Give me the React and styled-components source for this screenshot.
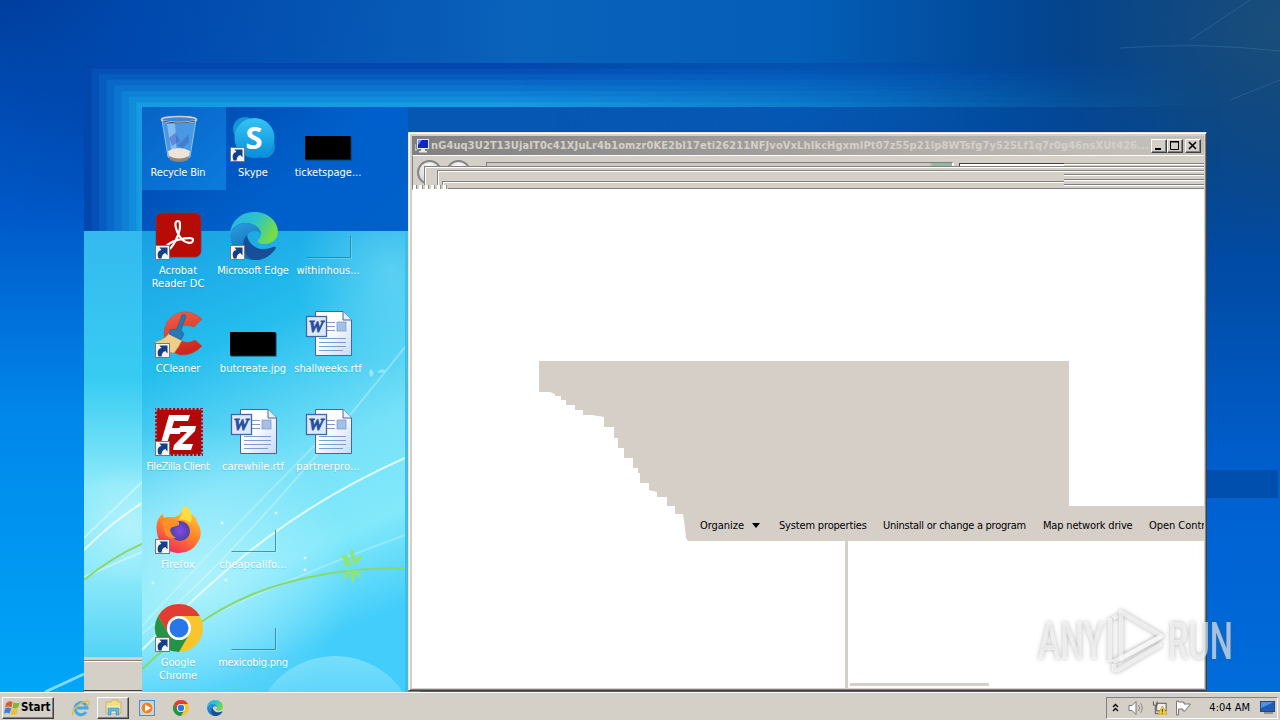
import React from "react";
import styled, { createGlobalStyle, css } from "styled-components";

const face = "#d4d0c8";
const ui = '"DejaVu Sans Condensed", "DejaVu Sans", "Liberation Sans", sans-serif';

const Global = createGlobalStyle`
  * { box-sizing: border-box; }
  body { margin: 0; overflow: hidden; background: #0058c0; }
`;

const Screen = styled.div`
  position: relative;
  display: flex;
  flex-direction: column;
  width: 1280px;
  height: 720px;
  overflow: hidden;
  font: 11px/13px ${ui};
  color: #000;
`;

const Desktop = styled.main`
  position: relative;
  flex: 1;
`;

const Backdrop = styled.svg`
  position: absolute;
  inset: 0;
  display: block;
`;

const IconGrid = styled.div`
  position: absolute;
  left: 141px;
  top: 114px;
  display: grid;
  grid-template-rows: repeat(6, 98px);
  grid-auto-columns: 75px;
  grid-auto-flow: column;
`;

const Shortcut = styled.div`
  display: flex;
  flex-direction: column;
  align-items: center;
  gap: 4px;
  color: #fff;
  text-align: center;
  svg { margin-left: 1px; overflow: visible; }
`;

const Caption = styled.span`
  white-space: pre;
  margin-right: 1px;
  letter-spacing: ${(p) => p.$track || 0}px;
  text-shadow: 0 1px 1px rgba(0, 60, 120, 0.2);
`;

const Frame = styled.section`
  position: absolute;
  left: 408px;
  top: 132px;
  width: 799px;
  height: 559px;
  display: flex;
  flex-direction: column;
  padding: 2px;
  background: ${face};
  border: 1px solid;
  border-color: #e6e3dc #404040 #404040 #e6e3dc;
  box-shadow: inset 1px 1px #fff, inset -1px -1px #808080;
`;

const TitleBar = styled.header`
  display: flex;
  align-items: center;
  height: 19px;
  margin-top: 1px;
  margin-left: 1px;
  padding: 0 3px 0 3px;
  background: linear-gradient(90deg, #808080, #a5a2a0 50%, #c2bfba 90%);
`;

const Title = styled.span`
  flex: 1;
  width: 0;
  overflow: hidden;
  white-space: nowrap;
  margin-left: 2px;
  font-weight: bold;
  letter-spacing: ${(p) => p.$track}px;
  color: ${face};
`;

const CaptionButton = styled.button`
  width: 16px;
  height: 14px;
  padding: 0;
  margin-left: ${(p) => (p.$apart ? 2 : 0)}px;
  background: ${face};
  border: 1px solid;
  border-color: #fff #404040 #404040 #fff;
  box-shadow: inset -1px -1px #808080;
  svg { display: block; }
`;

const Smear = styled.div`
  position: relative;
  height: 35px;
  margin-left: 1px;
  overflow: hidden;
  background: ${face};
  border-left: 1px solid #808080;
  border-top: 1px solid #fff;
  border-bottom: 1px solid #fff;
`;

const NavDisc = styled.i`
  position: absolute;
  left: ${(p) => p.$x}px;
  top: 4px;
  width: 25px;
  height: 25px;
  border: 2px solid #858585;
  border-radius: 50%;
  background: radial-gradient(circle at 50% 30%, #fff, #c8c8c8);
`;

const Ghost = styled.div`
  position: absolute;
  left: ${(p) => p.$x}px;
  top: ${(p) => p.$y}px;
  right: 0;
  bottom: 0;
  background: ${face};
  border-left: 1px solid #808080;
  border-top: 1px solid #808080;
  box-shadow: inset 1px 1px #fff;
`;

const AddressGhost = styled.div`
  position: absolute;
  left: 73px;
  top: 6px;
  width: 468px;
  height: 5px;
  border-left: 1px solid #808080;
  border-top: 1px solid #808080;
  border-right: 2px solid #fff;
  background: linear-gradient(90deg, #ccc9c2 95%, #91b8a0 96%);
`;

const SearchGhost = styled.div`
  position: absolute;
  left: 546px;
  top: 7px;
  width: 105px;
  height: 4px;
  background: #fff;
  border-left: 1px solid #404040;
  border-top: 1px solid #404040;
`;

const Scanlines = styled.div`
  position: absolute;
  right: 0;
  top: ${(p) => p.$y}px;
  width: 140px;
  height: ${(p) => p.$h}px;
  background: ${(p) => p.$fill};
`;

const Teeth = styled.div`
  position: absolute;
  left: 0;
  bottom: 0;
  width: 34px;
  height: 4px;
  background: repeating-linear-gradient(90deg, #fff 0 3px, #8c8a86 3px 4px, #d4d0c8 4px 6px);
`;

const Content = styled.div`
  flex: 1;
  display: flex;
  flex-direction: column;
  margin-left: 1px;
  margin-right: -1px;
  padding-top: 171px;
  background: #fff;
  border-right: 1px solid ${face};
`;

const edge = [
  [0, 0], [0, 31], [11, 31], [16, 33], [16, 35], [22, 35], [22, 39], [27, 39], [27, 44], [36, 44], [36, 49],
  [44, 49], [44, 54], [53, 54], [65, 56], [65, 66], [75, 66], [75, 77], [79, 77], [79, 87], [85, 87],
  [85, 97], [94, 97], [94, 107], [99, 107], [99, 112], [101, 112], [101, 122], [110, 122], [110, 129],
  [118, 131], [118, 136], [128, 136], [128, 145], [136, 145], [136, 153], [144, 153], [146, 167],
  [147, 177], [149, 180], [665, 180], [665, 145], [530, 145], [530, 0],
].map(([x, y]) => `${x}px ${y}px`).join(",");

const DragTrail = styled.div`
  height: 180px;
  margin-left: 127px;
  display: flex;
  flex-direction: column;
  justify-content: flex-end;
  overflow: hidden;
  background: #d5cfc8;
  clip-path: polygon(${edge});
`;

const CommandBar = styled.nav`
  display: flex;
  align-items: center;
  gap: 17px;
  height: 32px;
  padding-left: 161px;
  white-space: nowrap;
`;

const Command = styled.span`
  flex: none;
  display: flex;
  align-items: center;
  width: ${(p) => p.$w}px;
  letter-spacing: ${(p) => p.$track || 0}px;
`;

const Arrow = styled.i`
  margin-left: auto;
  margin-right: 2px;
  border: 4px solid transparent;
  border-top: 5px solid #000;
  border-bottom: 0;
`;

const Panes = styled.div`
  flex: 1;
  display: grid;
  grid-template-columns: 433px 3px 1fr;
`;

const Divider = styled.div`
  background: ${face};
`;

const Pane = styled.div`
  display: flex;
  flex-direction: column;
  justify-content: flex-end;
  padding: 0 0 2px 2px;
`;

const StatusStub = styled.div`
  width: 139px;
  height: 3px;
  background: ${face};
`;

const Watermark = styled.svg`
  position: absolute;
  left: 1030px;
  top: 600px;
  overflow: visible;
  filter: drop-shadow(0 0 2px rgba(90, 90, 90, 0.7));
`;

const Taskbar = styled.footer`
  display: flex;
  align-items: center;
  height: 28px;
  padding: 2px 2px 0;
  background: ${face};
  border-top: 1px solid #fff;
  position: relative;
`;

const raised = css`
  border: 1px solid;
  border-color: #fff #404040 #404040 #fff;
  box-shadow: inset -1px -1px #808080;
`;

const StartButton = styled.button`
  display: flex;
  align-items: center;
  gap: 1px;
  width: 52px;
  height: 22px;
  padding: 0 1px;
  background: ${face};
  font: bold 11.5px/13px ${ui};
  letter-spacing: 0;
  ${raised}
`;

const LaunchBar = styled.div`
  display: flex;
  margin-left: 10px;
`;

const Launch = styled.div`
  display: flex;
  align-items: center;
  justify-content: center;
  width: ${(p) => p.$w}px;
  height: 22px;
  border: 1px solid transparent;
  ${(p) => p.$open && raised}
`;

const Tray = styled.div`
  display: flex;
  align-items: center;
  width: 172px;
  height: 22px;
  margin-left: auto;
  padding: 0 2px 0 4px;
  border: 1px solid;
  border-color: #808080 #fff #fff #808080;
`;

const TrayItem = styled.span`
  display: flex;
  justify-content: center;
  width: ${(p) => p.$w}px;
`;

/* ---- drawings ---- */

const Arrowlet = () => (
  <g>
    <rect x="0.5" y="33.5" width="14" height="14" fill="#f4f4f4" stroke="#777" />
    <path d="M3.500 46.500C1.500 41 3.500 38.500 6.500 38L4.500 35.500H12.500V43.500L10.300 41C8 42 6.500 43.500 6.700 46.500Z" fill="#153f86" />
  </g>
);

const Svg = ({ children, link }) => (
  <svg width="48" height="48" viewBox="0 0 48 48">
    {children}
    {link && <Arrowlet />}
  </svg>
);

const Bin = () => (
  <Svg>
    <path d="M7 6L13 43Q24 49 35 43L41 6Z" fill="#75b5f2" fillOpacity=".6" stroke="#b6d8f5" strokeOpacity=".7" />
    <path d="M12 10L17 42L22 44L20 10Z" fill="#e0f2ff" opacity=".4" />
    <path d="M34 20L22 32L28 34L34 28Z" fill="#3a70c0" opacity=".6" />
    <path d="M14 24l6-5 5 8-8 5z" fill="#4754bd" opacity=".5" />
    <path d="M13 37Q24 31 35 37L34 43Q24 48 14 43Z" fill="#eee3d7" />
    <path d="M14 42Q24 47 34 42L33 46Q24 50 15 46Z" fill="#90867d" />
    <ellipse cx="24" cy="5.500" rx="17.500" ry="3" fill="#3f86d4" stroke="#cfcfcf" strokeWidth="1.700" />
    <path d="M8 7Q24 11 40 7" fill="none" stroke="#555" strokeWidth="1" />
  </Svg>
);

const Skype = () => (
  <Svg link>
    <defs><linearGradient id="sk" x2="0" y2="1"><stop stopColor="#35c4f2" /><stop offset="1" stopColor="#078fda" /></linearGradient></defs>
    <circle cx="15" cy="15" r="12" fill="#1296da" />
    <circle cx="34" cy="33" r="11" fill="#128fd9" />
    <circle cx="24.500" cy="24" r="20" fill="url(#sk)" />
    <text x="24" y="35" textAnchor="middle" fontFamily="Open Sans, sans-serif" fontWeight="700" fontSize="31" fill="#fff">S</text>
  </Svg>
);

const Acrobat = () => (
  <Svg link>
    <rect x="1" y="1" width="45" height="44" rx="6" fill="#b70b05" stroke="#86372f" strokeWidth=".7" />
    <path d="M23 9C18 9 21 19 25 25C29 31 38 33 38 28C38 24 23 27 17 30C11 33 8 38 12 38C17 38 25 22 25 14C25 11 25 9 23 9Z" fill="none" stroke="#fff" strokeWidth="2.200" />
  </Svg>
);

const EdgeArt = () => (
  <g>
    <defs>
      <linearGradient id="eg" x2="1" y2=".4"><stop stopColor="#2bb1e5" /><stop offset=".55" stopColor="#2cc3cc" /><stop offset="1" stopColor="#74dc45" /></linearGradient>
      <linearGradient id="eb" x2=".4" y2="1"><stop stopColor="#2aa0df" /><stop offset="1" stopColor="#1369ba" /></linearGradient>
    </defs>
    <path d="M0 22C1 9 11 0 24 0C39 0 48 10 48 20C48 28 41 32 34 32C29 32 27 30 28 28C30 26 31 24 31 22C30 16 23 11 16 11C8 11 3 15 0 22Z" fill="url(#eg)" />
    <path d="M0 22C3 15 9 11 16 11C24 11 31 16 31 22C27 17 19 19 17 24C13 33 20 44 32 47C15 52 0 39 0 22Z" fill="url(#eb)" />
    <path d="M17 23C18 32 28 40 40 36C44 35 46 34 46 36C42 43 33 49 24 48C15 46 9 32 17 23Z" fill="#164f98" />
  </g>
);

const CCleaner = () => (
  <Svg link>
    <defs><linearGradient id="cc" x2=".3" y2="1"><stop stopColor="#f1654d" /><stop offset="1" stopColor="#cf251c" /></linearGradient></defs>
    <path d="M47 9Q36-1 23 3Q9 9 9 25Q10 41 25 45Q38 46 47 36L40 30Q33 34 27 31Q22 28 22 22Q25 12 39 17Z" fill="url(#cc)" stroke="#b5523f" strokeWidth=".6" />
    <path d="M0 32Q12 29 15 21L27 30Q24 37 19 43Q9 42 0 32Z" fill="#f1cf8a" stroke="#c39751" strokeWidth=".6" />
    <path d="M15 20L22 19L27 5Q30 3 31 6L26 20L29 24L26 30L14 24Z" fill="#2679b5" stroke="#195d91" strokeWidth=".6" />
  </Svg>
);

const FileZilla = () => (
  <Svg link>
    <rect width="48" height="48" fill="#b20708" />
    <rect x=".7" y=".7" width="46.600" height="46.600" fill="none" stroke="#5ccaf0" strokeWidth="2" strokeDasharray="1.700 2.200" />
    <path d="M14 7H35L33 13H19L17 20H26L25 26H15L11 38H5Z" fill="#fff" />
    <path d="M25 18H41L40 23L27 36H38L36 42H18L19 37L32 24H23Z" fill="#fff" />
  </Svg>
);

const Firefox = () => (
  <Svg link>
    <defs>
      <linearGradient id="ff" x1=".8" x2=".3" y2="1"><stop stopColor="#ffd63c" /><stop offset=".5" stopColor="#ff8625" /><stop offset="1" stopColor="#f02a5d" /></linearGradient>
      <radialGradient id="fp"><stop stopColor="#8748e7" /><stop offset="1" stopColor="#4b42a7" /></radialGradient>
    </defs>
    <path d="M2 27C0 17 4 10 8 8L9 12C14 10 17 12 19 11C24 10 26 8 27 4L30 0Q34 2 36 8Q41 10 42 16Q49 27 43 36Q36 48 22 47Q5 45 2 27Z" fill="url(#ff)" />
    <circle cx="25" cy="25" r="10" fill="url(#fp)" />
    <path d="M7 16Q11 12 20 14Q25 15 24 19L15 22Q15 29 21 32Q11 34 9 24Z" fill="#ff9027" />
    <path d="M27 4L30 0Q36 3 37 10L36 17Q29 12 23 14Q27 10 27 4Z" fill="#ffdc3f" />
  </Svg>
);

const ChromeArt = () => (
  <g>
    <circle cx="24" cy="24" r="24" fill="#f9c52d" />
    <path d="M3.200 12A24 24 0 0 1 44.800 12H24A12 12 0 0 0 13.600 30Z" fill="#e13d32" />
    <path d="M3.200 12L13.600 30A12 12 0 0 0 34.400 30L24 48A24 24 0 0 1 3.200 12Z" fill="#249348" />
    <circle cx="24" cy="24" r="12" fill="#fff" />
    <circle cx="24" cy="24" r="9.500" fill="#2876ea" />
  </g>
);

const Doc = () => (
  <Svg>
    <defs><linearGradient id="dc" x2="1" y2="1"><stop offset=".4" stopColor="#fff" /><stop offset="1" stopColor="#c8d9f7" /></linearGradient></defs>
    <path d="M10.500 1.500H38L46.500 10V45.500H10.500Z" fill="url(#dc)" stroke="#49639d" />
    <path d="M38 1.500V10H46.500" fill="#e8effb" stroke="#49639d" />
    <path d="M22 12.500H30M22 16.500H30M22 20.500H30M14 28.500H41M14 32.500H41M14 36.500H41M14 40.500H38" stroke="#7f9cce" />
    <rect x="32" y="12" width="9" height="9" fill="#a6bfe5" stroke="#7393c9" strokeWidth=".7" />
    <rect x="1.500" y="6.500" width="20" height="20" fill="#dde9fb" stroke="#3d66ae" strokeWidth="1.300" />
    <text x="11" y="22" textAnchor="middle" fontFamily="Liberation Serif, serif" fontStyle="italic" fontWeight="bold" fontSize="17" fill="#264da0" stroke="#264da0" strokeWidth=".8">W</text>
  </Svg>
);

const Black = () => (
  <Svg><rect x="1" y="23" width="45.500" height="23.500" fill="#123a50" /><rect x="0" y="22" width="45.500" height="23.500" fill="#000" /></Svg>
);

const Clear = () => (
  <Svg>
    <path d="M1.500 45.500H45.500V24" fill="none" stroke="#287894" strokeOpacity=".75" />
    <path d="M2 46.500H46.500V25" fill="none" stroke="#fff" strokeOpacity=".2" />
  </Svg>
);

const shortcuts = [
  ["Recycle Bin", Bin, -0.2], ["Acrobat\nReader DC", Acrobat, 0], ["CCleaner", CCleaner, -0.1], ["FileZilla Client", FileZilla, -0.4],
  ["Firefox", Firefox, 0.1], ["Google\nChrome", () => <Svg link><ChromeArt /></Svg>, -0.1],
  ["Skype", Skype, 0], ["Microsoft Edge", () => <Svg link><EdgeArt /></Svg>, -0.1], ["butcreate.jpg", Black, 0],
  ["carewhile.rtf", Doc, 0], ["cheapcalifo...", Clear, 0.1], ["mexicobig.png", Clear, -0.25],
  ["ticketspage...", Black, 0], ["withinhous...", Clear, 0], ["shallweeks.rtf", Doc, -0.1], ["partnerpro...", Doc, 0.1],
];

const Wallpaper = () => (
  <Backdrop width="1280" height="692" viewBox="0 0 1280 692">
    <defs>
      <linearGradient id="left" x2="0" y2="1"><stop stopColor="#003f9f" /><stop offset=".3" stopColor="#0058c8" /><stop offset=".6" stopColor="#0087ea" /><stop offset="1" stopColor="#00a6f8" /></linearGradient>
      <linearGradient id="top"><stop stopColor="#0044a6" stopOpacity="0" /><stop offset=".1" stopColor="#004ab0" stopOpacity=".8" /><stop offset=".4" stopColor="#0a62ba" /><stop offset=".62" stopColor="#045fb8" /><stop offset=".84" stopColor="#00428f" /><stop offset="1" stopColor="#0b467f" /></linearGradient>
      <linearGradient id="drop" x2="0" y2="1"><stop offset=".35" stopColor="#fff" /><stop offset="1" stopColor="#000" /></linearGradient>
      <mask id="dm"><rect width="1280" height="240" fill="url(#drop)" /></mask>
      <linearGradient id="right" x2="0" y2="1"><stop stopColor="#003f8c" /><stop offset=".4" stopColor="#004ca6" /><stop offset=".7" stopColor="#0060d0" /><stop offset="1" stopColor="#006cda" /></linearGradient>
      <radialGradient id="corner" cx="1" cy=".1" r="1"><stop stopColor="#1e5078" stopOpacity=".8" /><stop offset="1" stopColor="#0b468a" stopOpacity="0" /></radialGradient>
      <linearGradient id="fade"><stop offset=".35" stopColor="#fff" /><stop offset=".7" stopColor="#555" /><stop offset=".95" stopColor="#000" /></linearGradient>
      <mask id="fm"><rect x="84" y="63" width="1196" height="170" fill="url(#fade)" /></mask>
      <linearGradient id="dark" x2=".4" y2="1"><stop stopColor="#0046aa" /><stop offset=".3" stopColor="#0060cb" /><stop offset="1" stopColor="#0062cb" /></linearGradient>
      <linearGradient id="sel" x2="1" y2="1"><stop stopColor="#0863c6" /><stop offset="1" stopColor="#0a7cdd" /></linearGradient>
      <linearGradient id="sky" x2=".25" y2="1"><stop stopColor="#18a0e2" /><stop offset=".3" stopColor="#25bdee" /><stop offset=".6" stopColor="#76e1f8" /><stop offset=".8" stopColor="#82e9fb" /><stop offset="1" stopColor="#42cdfa" /></linearGradient>
      <linearGradient id="sliver" x2="0" y2="1"><stop stopColor="#34b9ef" /><stop offset=".35" stopColor="#38ccf2" /><stop offset=".6" stopColor="#8eeafa" /><stop offset=".8" stopColor="#8eeafa" /><stop offset="1" stopColor="#54d3f5" /></linearGradient>
      <radialGradient id="glow"><stop stopColor="#c5f6fd" stopOpacity=".65" /><stop offset="1" stopColor="#c5f6fd" stopOpacity="0" /></radialGradient>
      <linearGradient id="orb" x2="0" y2="1"><stop stopColor="#c5f6fd" stopOpacity=".4" /><stop offset=".5" stopColor="#c5f6fd" stopOpacity="0" /></linearGradient>
      <clipPath id="main"><rect x="142" y="231" width="263" height="461" /></clipPath>
      <clipPath id="side"><rect x="84" y="231" width="58" height="426" /></clipPath>
    </defs>
    <rect width="420" height="692" fill="url(#left)" />
    <rect x="420" width="860" height="692" fill="url(#right)" />
    <rect width="1280" height="240" fill="url(#top)" mask="url(#dm)" />
    <rect x="960" width="320" height="260" fill="url(#corner)" />
    <g stroke="#5d9bc4" strokeOpacity=".25" fill="none">
      <path d="M1190 40L1250 0M1120 48Q1200 42 1280 51M1230 100L1280 80" />
    </g>
    <g mask="url(#fm)">
      {["#0447ac", "#0550b6", "#075cc0", "#0968c8", "#0b74ce", "#0e80d5", "#118cdb", "#169be3"].map((c, i) => (
        <rect key={c} x={84 + i * 7.5} y={63 + i * 5.6} width="1120" height={168 - i * 5.6} fill={c} />
      ))}
      <rect x="142" y="107" width="1100" height="60" fill="#0656b4" />
    </g>
    <rect x="1207" y="470" width="71" height="28" fill="#004fae" />
    <rect x="142" y="107" width="266" height="585" fill="url(#dark)" />
    <rect x="142" y="107" width="84" height="83" fill="url(#sel)" />
    <rect x="84" y="231" width="58" height="426" fill="url(#sliver)" />
    <g clipPath="url(#side)" fill="none" stroke="#e4fbff">
      <circle cx="130" cy="525" r="60" fill="url(#glow)" stroke="none" />
      <path d="M84 550Q112 522 142 503" strokeWidth="2" />
      <path d="M84 538L142 482M84 577L142 552" opacity=".5" strokeWidth="2" />
      <path d="M84 580Q114 556 142 544" stroke="#8bd76d" strokeWidth="2" />
    </g>
    <rect x="142" y="231" width="263" height="461" fill="url(#sky)" />
    <g clipPath="url(#main)" fill="none" stroke="#e1fbff">
      <circle cx="200" cy="575" r="150" fill="url(#glow)" stroke="none" />
      <circle cx="390" cy="270" r="95" fill="url(#glow)" opacity=".5" stroke="none" />
      <path d="M142 650C230 560 300 505 405 458" strokeWidth="2" />
      <path d="M142 634Q240 555 405 347" strokeWidth="2" opacity=".35" />
      <path d="M142 626Q230 530 330 430M170 635Q270 585 405 535" strokeWidth="2" opacity=".3" />
      <path d="M142 669C210 605 280 568 405 568" stroke="#86d96c" strokeWidth="2" />
      <g fill="#91e46e" stroke="none">
        <path d="M341 555q6-2 10 7q-8 1-10-7M342 563q6-3 11 2q-7 3-11-2M352 549q4 5 2 13q-6-7-2-13M352 564q3-8 10-8q-1 7-10 8" />
        <path d="M350 569q-1 8-7 11q0-8 7-11M352 569q4 6 1 14q-5-6-1-14M353 569q7 1 8 9q-7-2-8-9" />
      </g>
      <circle cx="335" cy="738" r="82" fill="url(#orb)" stroke="none" />
      <g fill="#fff" opacity=".7" stroke="none">{[[222, 523], [276, 513], [226, 580], [305, 558], [153, 583], [305, 570]].map(([x, y]) => <circle key={x + y} cx={x} cy={y} r="1.400" />)}</g>
      <path d="M371 377q-4-4 0-8q5 4 0 8M377 372q5-5 9-1q-4 3-9 1" fill="#c5f1fa" opacity=".6" stroke="none" />
    </g>
    <path d="M45 692L84 674" stroke="#9fe9ff" strokeWidth="3" opacity=".8" />
    <rect x="405" y="231" width="3" height="461" fill="#3dbdea" />
    <rect x="84" y="657" width="58" height="35" fill={face} />
    <path d="M84 660.500H142" stroke="#808080" />
    <path d="M84 661.500H142" stroke="#fff" />
    <path d="M84 690.500H142" stroke="#404040" />
  </Backdrop>
);

export default function App() {
  return (
    <Screen>
      <Global />
      <Desktop>
        <Wallpaper />
        <IconGrid>
          {shortcuts.map(([name, Art, track]) => (
            <Shortcut key={name}><Art /><Caption $track={track}>{name}</Caption></Shortcut>
          ))}
        </IconGrid>
        <Frame>
          <TitleBar>
            <svg width="14" height="14" viewBox="0 0 14 14">
              <path d="M0 5v6h2" fill="none" stroke="#eee" />
              <rect x="2.500" y=".5" width="11" height="9" fill="#1026c0" stroke="#e5e5e5" />
              <path d="M3 1h4l-4 5z" fill="#6d93ff" />
              <path d="M6 10h4v2H6zM4 12h8v1.500H4z" fill="#e8e8e8" />
            </svg>
            <Title $track={0.115}>nG4uq3U2T13UjaIT0c41XJuLr4b1omzr0KE2bI17eti26211NFJvoVxLhIkcHgxmIPt07z55p21lp8WTsfg7y525Lf1q7r0g46nsXUt426...</Title>
            <CaptionButton><svg width="13" height="11"><path d="M3 9H9" stroke="#000" strokeWidth="2" /></svg></CaptionButton>
            <CaptionButton><svg width="13" height="11"><path d="M2.500 1V9.500H10.500V1M2 1.500H11M2 2H11" fill="none" stroke="#000" /></svg></CaptionButton>
            <CaptionButton $apart><svg width="13" height="11"><path d="M3 2L10 9M10 2L3 9" stroke="#000" strokeWidth="1.600" /></svg></CaptionButton>
          </TitleBar>
          <Smear>
            <NavDisc $x={4} />
            <NavDisc $x={33} />
            <AddressGhost />
            <SearchGhost />
            <Ghost $x={11} $y={10} />
            <Ghost $x={24} $y={14} />
            <Ghost $x={29} $y={25} />
            <Ghost $x={35} $y={32} />
            <Scanlines $y={7} $h={3} $fill="linear-gradient(#808080 0 1px, #fff 1px 2px, #d4d0c8 2px)" />
            <Scanlines $y={18} $h={14} $fill="repeating-linear-gradient(#808080 0 1px, #fff 1px 2px, #d4d0c8 2px 5px)" />
            <Teeth />
          </Smear>
          <Content>
            <DragTrail>
              <CommandBar>
                <Command $w={62} $track={-0.05}>Organize<Arrow /></Command>
                <Command $w={87} $track={-0.17}>System properties</Command>
                <Command $w={143} $track={-0.26}>Uninstall or change a program</Command>
                <Command $w={89} $track={-0.17}>Map network drive</Command>
                <Command $w={110} $track={-0.05}>Open Control Panel</Command>
              </CommandBar>
            </DragTrail>
            <Panes><div /><Divider /><Pane><StatusStub /></Pane></Panes>
          </Content>
        </Frame>
      </Desktop>
      <Taskbar>
        <StartButton>
          <svg width="16" height="16" viewBox="0 0 15 15">
            <path d="M2 3Q5 0 8 2L7 7Q4 5 1 7Z" fill="#e8572b" /><path d="M9 2Q12 4 15 2L13 7Q10 9 8 7Z" fill="#7eb72f" />
            <path d="M1 8Q4 6 7 8L5 13Q3 11 0 13Z" fill="#3c81d3" /><path d="M8 8Q10 10 13 8L12 13Q8 15 6 13Z" fill="#f2bd25" />
          </svg>
          Start
        </StartButton>
        <LaunchBar>
          <Launch $w={33}>
            <svg width="18" height="18" viewBox="0 0 18 18"><path d="M14 13A6 6 0 1 1 15 9H5" fill="none" stroke="#45a9e4" strokeWidth="3" /><path d="M1 16Q-1 11 8 5Q15 0 17 3Q18 5 14 7" fill="none" stroke="#e8bd3a" strokeWidth="1.400" /></svg>
          </Launch>
          <Launch $w={32} $open>
            <svg width="17" height="17" viewBox="0 0 17 17"><path d="M1 3h5l1-2h6v2h3v11H1z" fill="#f4dd87" stroke="#c4a44d" strokeWidth=".7" /><path d="M2 7h13v7H2z" fill="#f9edb3" /><path d="M3 16V9h11v7h-3v-4H6v4z" fill="#63b7e6" stroke="#3b8dbf" strokeWidth=".6" /></svg>
          </Launch>
          <Launch $w={36}>
            <svg width="16" height="16" viewBox="0 0 16 16"><rect x=".5" y=".5" width="15" height="15" fill="#b5d7ef" stroke="#4f8fc4" /><circle cx="8" cy="8" r="6" fill="#f4811f" stroke="#fff" strokeWidth=".6" /><path d="M6 4.500L12 8L6 11.500Z" fill="#fff" /></svg>
          </Launch>
          <Launch $w={32}><svg width="16" height="16" viewBox="0 0 48 48"><ChromeArt /></svg></Launch>
          <Launch $w={36}><svg width="16" height="16" viewBox="0 0 48 48"><EdgeArt /></svg></Launch>
        </LaunchBar>
        <Tray>
          <TrayItem $w={10}><svg width="7" height="9"><path d="M1 4L3.500 1.500L6 4M1 8L3.500 5.500L6 8" fill="none" stroke="#000" strokeWidth="1.300" /></svg></TrayItem>
          <TrayItem $w={32}><svg width="17" height="16" viewBox="0 0 17 16"><path d="M1 5.500H4L8 1.500V14.500L4 10.500H1Z" fill="#fff" stroke="#777" /><path d="M10.500 5Q12.500 8 10.500 11M12.500 3Q16 8 12.500 13" fill="none" stroke="#888" /></svg></TrayItem>
          <TrayItem $w={16}><svg width="17" height="16" viewBox="0 0 17 16"><rect x="5" y="3" width="10" height="8" fill="#eee" stroke="#555" /><path d="M1.500 1v4h4V1M3.500 5v9h5" fill="none" stroke="#555" /><path d="M11 6L16 14.500H6.500Z" fill="#ffd51b" stroke="#b79108" strokeWidth=".6" /><path d="M11 9v3M11 13v1" stroke="#222" /></svg></TrayItem>
          <TrayItem $w={32}><svg width="17" height="16" viewBox="0 0 17 16"><path d="M1.500 1V15H3.500V9H8V11H10L15.500 4H9V2H3.500V1Z" fill="#fff" stroke="#777" /></svg></TrayItem>
          <TrayItem $w={62}>4:04 AM</TrayItem>
          <TrayItem $w={15}><svg width="15" height="13" viewBox="0 0 15 13"><rect x=".5" y=".5" width="14" height="10" fill="#1e5cb8" stroke="#26497d" /><path d="M1 1h13l-13 6z" fill="#5293e0" /><path d="M4 12h9" stroke="#555" /></svg></TrayItem>
        </Tray>
      </Taskbar>
      <Watermark width="220" height="82" viewBox="0 0 220 82">
        <g fill="#fff" fillOpacity=".6" fontFamily="Roboto, sans-serif" fontWeight="500" fontSize="52">
          <text x="8" y="59" textLength="66" lengthAdjust="spacingAndGlyphs">ANY</text>
          <text x="138" y="59" textLength="65" lengthAdjust="spacingAndGlyphs">RUN</text>
        </g>
        <g fill="none" stroke="#fff" strokeOpacity=".65" strokeWidth="4.500" strokeLinejoin="round">
          <path d="M91 12L132 36L91 59Z" />
          <path d="M80 18V62M83 18L88 16M83 62L132 36" /><path d="M84 64V70H88L132 44" />
        </g>
      </Watermark>
    </Screen>
  );
}
